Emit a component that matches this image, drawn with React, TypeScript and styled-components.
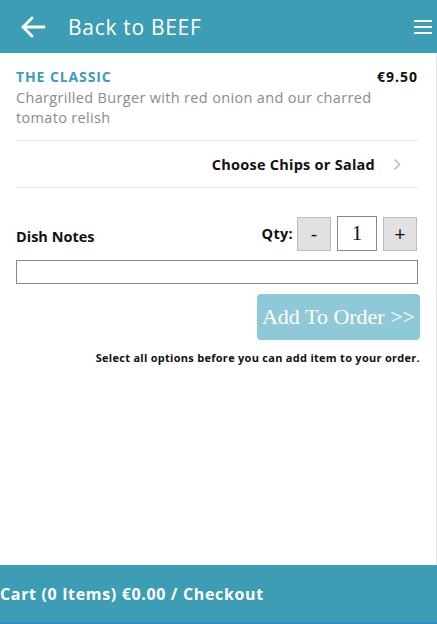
import React from "react";
import styled, { createGlobalStyle } from "styled-components";

const Global = createGlobalStyle`
  html, body { margin: 0; padding: 0; background: #fff; }
  body { font-family: "Open Sans", "Liberation Sans", sans-serif; }
  * { box-sizing: border-box; }
`;

const Page = styled.div`
  display: flex;
  flex-direction: column;
  width: 437px;
  height: 624px;
  overflow: hidden;
`;

const Header = styled.header`
  flex: 0 0 53px;
  display: flex;
  align-items: center;
  background: #3c9db5;
  color: #fff;
  padding: 0 5px 0 20px;
`;

const BackButton = styled.button`
  display: flex;
  align-items: center;
  background: none;
  border: 0;
  padding: 0;
  margin-right: 22px;
  color: #fff;
  cursor: pointer;
`;

const Title = styled.h1`
  flex: 1;
  margin: 0;
  font-family: "Open Sans", sans-serif;
  font-weight: 400;
  font-size: 21px;
  letter-spacing: 0.7px;
`;

const MenuButton = styled.button`
  display: flex;
  flex-direction: column;
  gap: 4px;
  background: none;
  border: 0;
  padding: 0;
  cursor: pointer;
`;

const MenuLine = styled.span`
  display: block;
  width: 18px;
  height: 2px;
  background: #fff;
`;

const Main = styled.main`
  flex: 1;
  padding: 14px 18px 0 16px;
  border-right: 1px solid #e4e4e4;
`;

const TitleRow = styled.div`
  display: flex;
  justify-content: space-between;
  align-items: baseline;
`;

const DishName = styled.h2`
  margin: 0;
  color: #3c9db5;
  font-size: 14px;
  font-weight: 700;
  line-height: 18px;
  letter-spacing: 0.9px;
`;

const Price = styled.span`
  color: #111;
  font-size: 14px;
  font-weight: 700;
  letter-spacing: 1px;
`;

const Description = styled.p`
  margin: 2px 0 0;
  color: #8b8b8b;
  font-size: 14.5px;
  line-height: 20px;
  letter-spacing: 0.33px;
  padding-bottom: 12px;
  border-bottom: 1px solid #e6e6e6;
`;

const OptionRow = styled.div`
  display: flex;
  justify-content: flex-end;
  align-items: center;
  gap: 18px;
  height: 47px;
  padding-right: 17px;
  border-bottom: 1px solid #e6e6e6;
  font-size: 14.5px;
  font-weight: 700;
  letter-spacing: 0.25px;
  color: #111;
`;

const NotesRow = styled.div`
  display: flex;
  align-items: center;
  justify-content: space-between;
  margin-top: 28px;
`;

const Label = styled.label`
  font-size: 14.5px;
  font-weight: 700;
  color: #111;
  padding-top: 6px;
`;

const Qty = styled.div`
  display: flex;
  align-items: center;
  gap: 5px;
  margin-right: 1px;
`;

const QtyLabel = styled.span`
  font-size: 14.5px;
  font-weight: 700;
  letter-spacing: 0.3px;
  color: #111;
  margin-right: -1px;
`;

const QtyButton = styled.button`
  width: 34px;
  height: 34px;
  background: #e1e1e1;
  border: 1px solid #bdbdbd;
  font-family: "Open Sans", sans-serif;
  font-size: 20px;
  color: #111;
  padding: 0;
`;

const QtyInput = styled.input`
  width: 40px;
  height: 35px;
  border: 1px solid #8a8a8a;
  text-align: center;
  font-family: "Liberation Serif", serif;
  font-size: 21px;
  color: #111;
  margin: 0 1px;
`;

const NotesInput = styled.input`
  display: block;
  width: 100%;
  height: 24px;
  margin-top: 9px;
  border: 1px solid #888;
`;

const Actions = styled.div`
  display: flex;
  flex-direction: column;
  align-items: flex-end;
  margin-right: -2px;
`;

const AddButton = styled.button`
  margin-top: 10px;
  width: 163px;
  height: 46px;
  border: 0;
  border-radius: 4px;
  background: #8fc8d6;
  color: #fff;
  font-family: "Liberation Serif", serif;
  font-size: 22px;
  padding: 0;
`;

const Hint = styled.p`
  margin: 10px 0 0;
  font-size: 11px;
  font-weight: 700;
  letter-spacing: 0.28px;
  color: #111;
`;

const Footer = styled.footer`
  flex: 0 0 59px;
  display: flex;
  align-items: center;
  background: #3c9db5;
  border-bottom: 2px solid #2f8cc4;
  color: #fff;
  font-size: 16px;
  font-weight: 700;
  letter-spacing: 0.65px;
  padding-top: 1px;
`;

export default function App() {
  return (
    <>
      <Global />
      <Page>
        <Header>
          <BackButton aria-label="Back">
            <svg width="26" height="22" viewBox="0 0 26 22" fill="none" stroke="#fff" strokeWidth="2.8" strokeLinecap="round" strokeLinejoin="round">
              <path d="M24 11H3" />
              <path d="M12 2L3 11l9 9" />
            </svg>
          </BackButton>
          <Title>Back to BEEF</Title>
          <MenuButton aria-label="Menu">
            <MenuLine />
            <MenuLine />
            <MenuLine />
          </MenuButton>
        </Header>
        <Main>
          <TitleRow>
            <DishName>THE CLASSIC</DishName>
            <Price>€9.50</Price>
          </TitleRow>
          <Description>Chargrilled Burger with red onion and our charred tomato relish</Description>
          <OptionRow>
            <span>Choose Chips or Salad</span>
            <svg width="8" height="13" viewBox="0 0 8 13" fill="none" stroke="#bbb" strokeWidth="1.6">
              <path d="M1.5 1.5l5 5-5 5" />
            </svg>
          </OptionRow>
          <NotesRow>
            <Label htmlFor="notes">Dish Notes</Label>
            <Qty>
              <QtyLabel>Qty:</QtyLabel>
              <QtyButton>-</QtyButton>
              <QtyInput defaultValue="1" />
              <QtyButton>+</QtyButton>
            </Qty>
          </NotesRow>
          <NotesInput id="notes" />
          <Actions>
            <AddButton>Add To Order &gt;&gt;</AddButton>
            <Hint>Select all options before you can add item to your order.</Hint>
          </Actions>
        </Main>
        <Footer>Cart (0 Items) €0.00 / Checkout</Footer>
      </Page>
    </>
  );
}
